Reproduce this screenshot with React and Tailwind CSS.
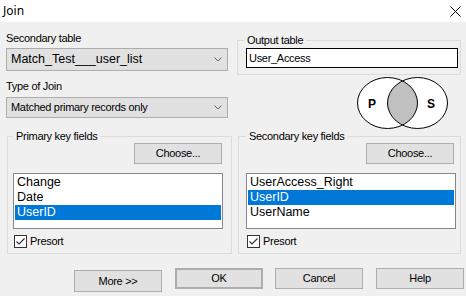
import React from 'react';

function Chevron() {
  return (
    <svg width="8" height="5" viewBox="0 0 8 5" className="shrink-0">
      <path d="M0.5 0.5 L4 4 L7.5 0.5" fill="none" stroke="#606060" strokeWidth="1" />
    </svg>
  );
}

function Combo({ value, big }) {
  return (
    <div
      className={`flex items-center justify-between border border-[#adadad] bg-[#e1e1e1] pl-[4px] pr-[5px] ${
        big ? 'h-[23px] text-[12.5px] tracking-normal' : 'h-[21px]'
      }`}
    >
      <span className="whitespace-nowrap">{value}</span>
      <Chevron />
    </div>
  );
}

function Button({ children, className = '' }) {
  return (
    <button
      type="button"
      className={`flex h-[21px] w-[88px] items-center justify-center border border-[#adadad] bg-[#e1e1e1] ${className}`}
    >
      {children}
    </button>
  );
}

function Checkbox({ label }) {
  return (
    <div className="ml-[1px] mt-[6px] flex items-center gap-[3px]">
      <svg width="13" height="13" viewBox="0 0 13 13">
        <rect x="0.5" y="0.5" width="12" height="12" fill="#fff" stroke="#333" />
        <path d="M2.5 6.5 L5 9 L10.5 3.5" fill="none" stroke="#333" strokeWidth="1.2" />
      </svg>
      <span className="leading-[13px]">{label}</span>
    </div>
  );
}

function ListBox({ items, selected }) {
  return (
    <div className="mt-[9px] h-[56px] w-[210px] border border-[#828790] bg-white p-[1px] text-[12.5px] tracking-normal">
      {items.map((item) => (
        <div
          key={item}
          className={`h-[15px] pl-[2px] leading-[15px] ${
            item === selected ? 'bg-[#0078d7] text-white' : 'text-black'
          }`}
        >
          {item}
        </div>
      ))}
    </div>
  );
}

function KeyGroup({ title, items, selected, className, buttonClass }) {
  return (
    <fieldset className={`h-[124px] border border-[#dcdcdc] ${className}`}>
      <legend className="px-[3px] leading-[13px]">{title}</legend>
      <div className="flex justify-end">
        <Button className={buttonClass}>Choose...</Button>
      </div>
      <ListBox items={items} selected={selected} />
      <Checkbox label="Presort" />
    </fieldset>
  );
}

function Venn() {
  return (
    <svg width="92" height="53" viewBox="0 0 92 53" className="ml-[120px] mt-[2px]">
      <defs>
        <clipPath id="leftCircle">
          <ellipse cx="30.5" cy="26" rx="30" ry="25.5" />
        </clipPath>
      </defs>
      <ellipse cx="30.5" cy="26" rx="30" ry="25.5" fill="#fff" />
      <ellipse cx="60.5" cy="26" rx="30" ry="25.5" fill="#fff" />
      <ellipse cx="60.5" cy="26" rx="30" ry="25.5" fill="#c0c0c0" clipPath="url(#leftCircle)" />
      <ellipse cx="30.5" cy="26" rx="30" ry="25.5" fill="none" stroke="#000" />
      <ellipse cx="60.5" cy="26" rx="30" ry="25.5" fill="none" stroke="#000" />
      <text x="11" y="31" fontFamily="Liberation Sans, Arial, sans-serif" fontWeight="bold" fontSize="12">
        P
      </text>
      <text x="70" y="31" fontFamily="Liberation Sans, Arial, sans-serif" fontWeight="bold" fontSize="12">
        S
      </text>
    </svg>
  );
}

export default function App() {
  return (
    <div className="flex h-[296px] w-[466px] flex-col overflow-hidden bg-[#f0f0f0] font-['Liberation_Sans',Arial,sans-serif] text-[11px] tracking-[-0.3px] text-black">
      {/* title bar */}
      <div className="flex h-[22px] shrink-0 items-center justify-between bg-white pl-[3px] pr-[5px]">
        <span className="font-['Noto_Sans',sans-serif] text-[12px] tracking-normal">Join</span>
        <svg width="11" height="11" viewBox="0 0 11 11">
          <path d="M0.5 0.5 L10.5 10.5 M10.5 0.5 L0.5 10.5" stroke="#000" strokeWidth="1" />
        </svg>
      </div>

      <div className="pt-[10px]">
        {/* top row */}
        <div className="flex">
          <div className="ml-[6px] w-[222px]">
            <div className="leading-[13px]">Secondary table</div>
            <div className="mt-[3px]">
              <Combo value="Match_Test___user_list" big />
            </div>
            <div className="mt-[9px] leading-[13px]">Type of Join</div>
            <div className="mt-[4px]">
              <Combo value="Matched primary records only" />
            </div>
          </div>

          <div className="ml-[9px] w-[224px]">
            <fieldset className="mt-[2px] border border-[#dcdcdc] pb-[6px] pl-[6px]">
              <legend className="px-[3px] leading-[13px]">Output table</legend>
              <div className="ml-[2px] mt-[1px] flex h-[20px] w-[212px] items-center border border-black bg-white pl-[2px]">
                User_Access
              </div>
            </fieldset>
            <Venn />
          </div>
        </div>

        {/* key field groups */}
        <div className="flex gap-[6px] pl-[7px]">
          <KeyGroup
            title="Primary key fields"
            items={['Change', 'Date', 'UserID']}
            selected="UserID"
            className="w-[225px] px-[5px]"
            buttonClass="mr-[4px]"
          />
          <KeyGroup
            title="Secondary key fields"
            items={['UserAccess_Right', 'UserID', 'UserName']}
            selected="UserID"
            className="w-[223px] pl-[7px] pr-[4px]"
            buttonClass="mr-[2px]"
          />
        </div>

        {/* dialog buttons */}
        <div className="mt-[14px] flex items-start pl-[74px]">
          <Button className="mt-[2px] h-[22px]">More &gt;&gt;</Button>
          <Button className="ml-[13px] border-2 border-[#0078d7]">OK</Button>
          <Button className="ml-[12px]">Cancel</Button>
          <Button className="ml-[13px] w-[87px]">Help</Button>
        </div>
      </div>
    </div>
  );
}
